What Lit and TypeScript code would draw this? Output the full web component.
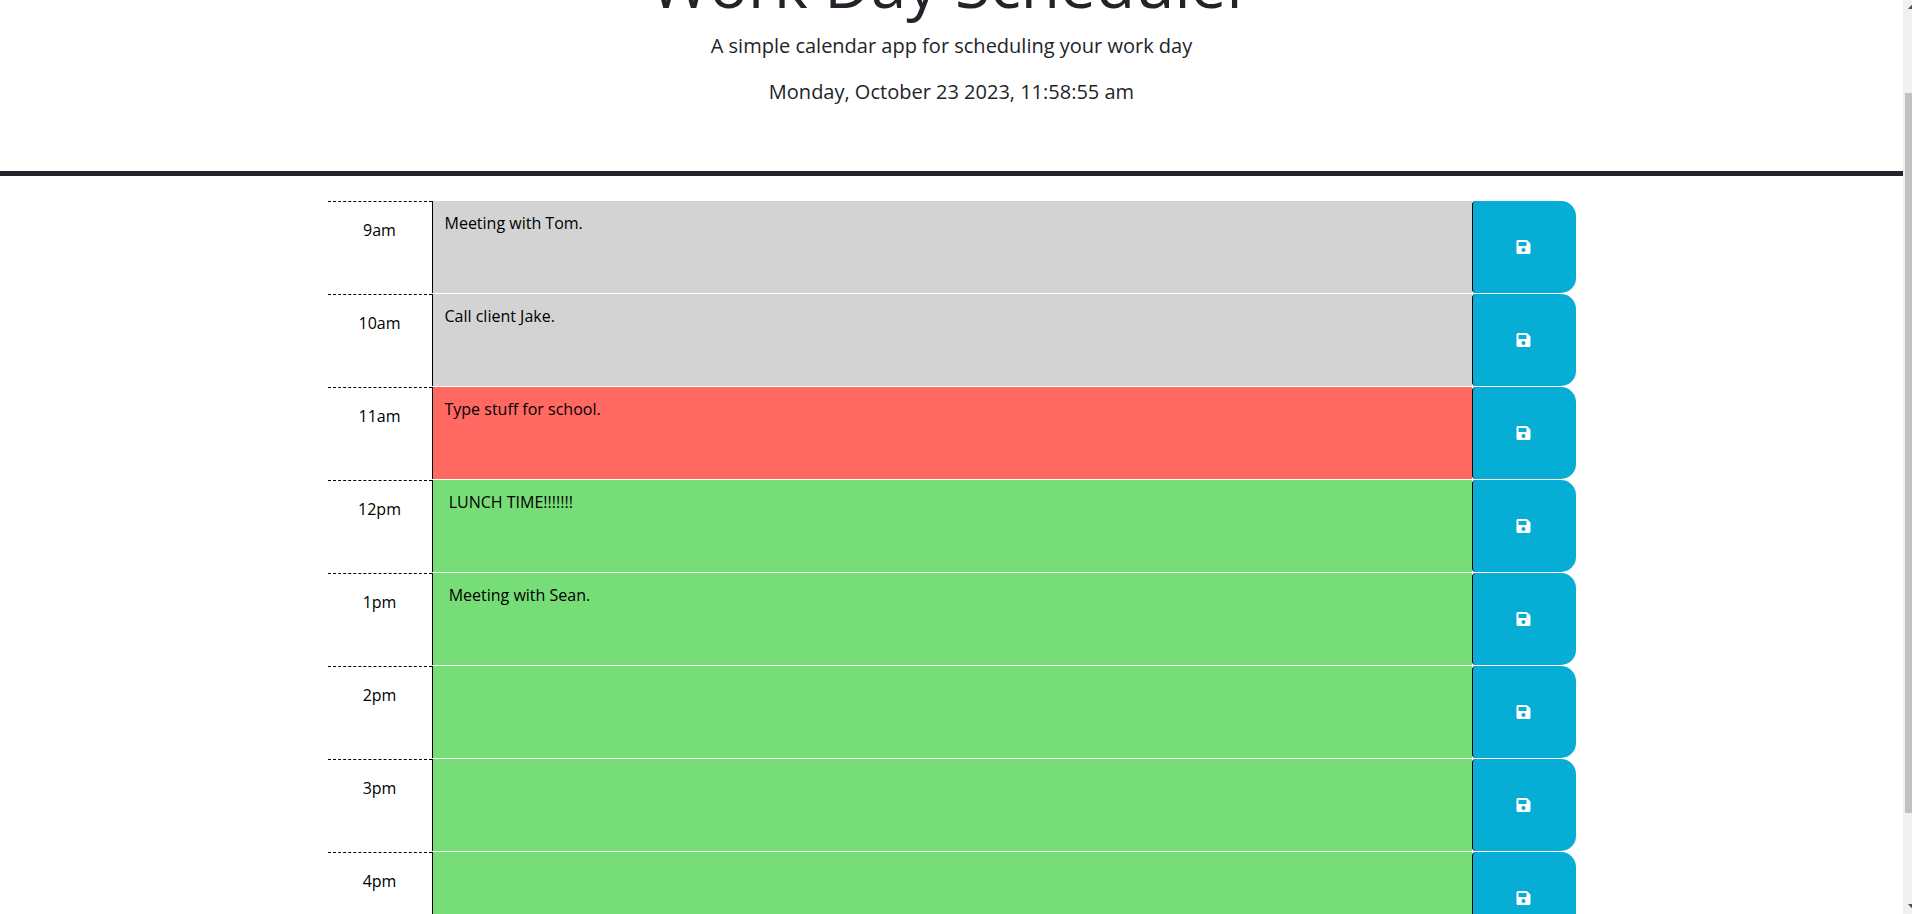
import { LitElement, html, css, svg } from "lit";
import { customElement, state, query } from "lit/decorators.js";
import { classMap } from "lit/directives/class-map.js";

interface Slot {
  hour: number;
  text: string;
}

const saveIcon = svg`<path fill="currentColor" d="M433.941 129.941l-83.882-83.882A48 48 0 0 0 316.118 32H48C21.49 32 0 53.49 0 80v352c0 26.51 21.49 48 48 48h352c26.51 0 48-21.49 48-48V163.882a48 48 0 0 0-14.059-33.941zM224 416c-35.346 0-64-28.654-64-64 0-35.346 28.654-64 64-64s64 28.654 64 64c0 35.346-28.654 64-64 64zm96-304.52V212c0 6.627-5.373 12-12 12H76c-6.627 0-12-5.373-12-12V108c0-6.627 5.373-12 12-12h228.52c3.183 0 6.235 1.264 8.485 3.515l3.48 3.48A11.996 11.996 0 0 1 320 111.48z"/>`;

@customElement("app-root")
export class AppRoot extends LitElement {
  static styles = css`
    :host {
      display: flex;
      height: 100vh;
      overflow: hidden;
      background: #fff;
      color: #212529;
      font: 400 16px/24px "Open Sans", sans-serif;
    }
    *,
    *::before,
    *::after {
      box-sizing: border-box;
    }
    .page {
      flex: 1;
      min-width: 0;
      overflow-y: auto;
      scrollbar-width: none;
    }
    .header {
      padding: 48px;
      margin-bottom: 24px;
      border-bottom: 5px solid #212529;
      text-align: center;
    }
    .title {
      margin: 0 0 10px;
      font-size: 64px;
      line-height: 75px;
      font-weight: 400;
    }
    .lead {
      margin: 0 0 16px;
      font-size: 20px;
      line-height: 30px;
    }
    .schedule {
      max-width: 1248px;
      margin: 0 auto;
      padding-bottom: 2px;
    }
    .block {
      display: grid;
      grid-template-columns: 1fr 10fr 1fr;
      min-height: 93px;
      border-top: 1px solid #fff;
    }
    .hour {
      padding: 16px 0;
      border-top: 1px dashed #000;
      color: #000;
      text-align: center;
    }
    .description {
      display: block;
      width: 100%;
      height: 100%;
      margin: 0;
      padding: 10px 12px;
      border: 0;
      border-left: 1px solid #000;
      border-radius: 0;
      outline: 0;
      resize: none;
      overflow: auto;
      color: #000;
      font: inherit;
    }
    .past {
      background: #d3d3d3;
    }
    .present {
      background: #ff6961;
    }
    .future {
      background: #77dd77;
    }
    .save {
      display: flex;
      align-items: center;
      justify-content: center;
      padding: 0 2px 0 0;
      border: 0;
      border-left: 1px solid #000;
      border-radius: 4px 15px 15px 4px;
      background: #06aed5;
      color: #fff;
      cursor: pointer;
    }
    .icon {
      width: 15px;
      height: 16px;
    }
    .scrollbar {
      display: flex;
      flex-direction: column;
      width: 9px;
      overflow: hidden;
      background: #f1f1f1;
    }
    .arrow {
      flex: none;
      width: 17px;
      height: 17px;
      fill: #505050;
    }
    .track {
      flex: 1;
      padding: 76px 0 84px 2px;
      display: flex;
    }
    .thumb {
      flex: 1;
      background: #c1c1c1;
    }
  `;

  @state() private currentHour = 11;
  @state() private slots: Slot[] = [
    { hour: 9, text: "Meeting with Tom." },
    { hour: 10, text: "Call client Jake." },
    { hour: 11, text: "Type stuff for school." },
    { hour: 12, text: " LUNCH TIME!!!!!!!" },
    { hour: 13, text: " Meeting with Sean." },
    { hour: 14, text: "" },
    { hour: 15, text: "" },
    { hour: 16, text: "" },
    { hour: 17, text: "" },
  ];

  @query(".page") private page!: HTMLElement;

  protected firstUpdated() {
    this.page.scrollTop = 102;
  }

  private label(hour: number) {
    return `${hour > 12 ? hour - 12 : hour}${hour < 12 ? "am" : "pm"}`;
  }

  private save(hour: number) {
    const field = this.renderRoot.querySelector<HTMLTextAreaElement>(`#text-${hour}`);
    this.slots = this.slots.map((s) => (s.hour === hour ? { hour, text: field?.value ?? "" } : s));
  }

  private renderSlot({ hour, text }: Slot) {
    const tone = {
      description: true,
      past: hour < this.currentHour,
      present: hour === this.currentHour,
      future: hour > this.currentHour,
    };
    return html`
      <div class="block">
        <label class="hour" for="text-${hour}">${this.label(hour)}</label>
        <textarea id="text-${hour}" class=${classMap(tone)} rows="3" spellcheck="false" .value=${text}></textarea>
        <button class="save" type="button" aria-label="save" @click=${() => this.save(hour)}>
          <svg class="icon" viewBox="0 0 448 512" aria-hidden="true">${saveIcon}</svg>
        </button>
      </div>
    `;
  }

  render() {
    return html`
      <div class="page">
        <header class="header">
          <h1 class="title">Work Day Scheduler</h1>
          <p class="lead">A simple calendar app for scheduling your work day</p>
          <p class="lead">Monday, October 23 2023, 11:58:55 am</p>
        </header>
        <main class="schedule">${this.slots.map((s) => this.renderSlot(s))}</main>
      </div>
      <div class="scrollbar" aria-hidden="true">
        <svg class="arrow" viewBox="0 0 17 17"><path d="M5 9h7L8.500 5z" /></svg>
        <div class="track"><div class="thumb"></div></div>
        <svg class="arrow" viewBox="0 0 17 17"><path d="M5 7h7L8.500 11z" /></svg>
      </div>
    `;
  }
}
